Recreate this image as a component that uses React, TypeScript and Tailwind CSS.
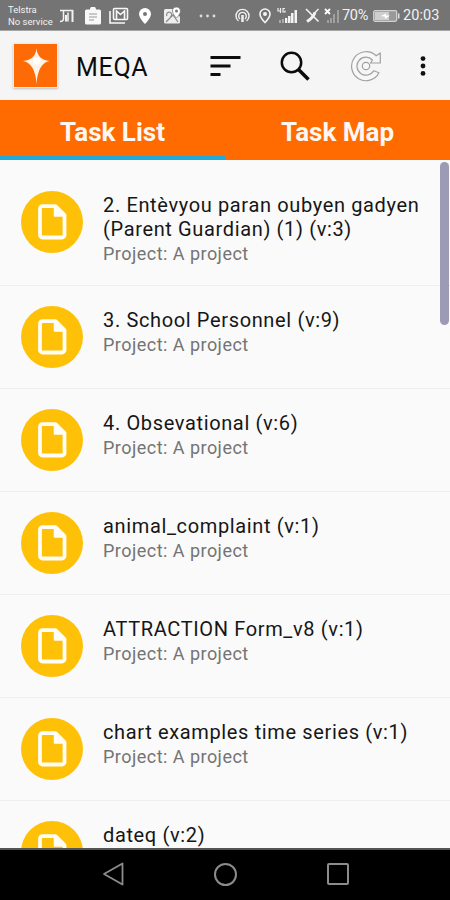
import type { ReactNode } from 'react';

interface Task {
  title: string;
  project?: string;
  tall?: boolean;
}

const TASKS: Task[] = [
  { title: '2. Entèvyou paran oubyen gadyen (Parent Guardian) (1) (v:3)', project: 'A project', tall: true },
  { title: '3. School Personnel (v:9)', project: 'A project' },
  { title: '4. Obsevational (v:6)', project: 'A project' },
  { title: 'animal_complaint (v:1)', project: 'A project' },
  { title: 'ATTRACTION Form_v8 (v:1)', project: 'A project' },
  { title: 'chart examples time series (v:1)', project: 'A project' },
  { title: 'dateq (v:2)' },
];

function Signal({ faded = false }: { faded?: boolean }) {
  return (
    <svg viewBox={faded ? '0 0 16 18' : '0 0 21 18'} className={faded ? 'w-[16px] h-[18px]' : 'w-[21px] h-[18px]'}>
      {faded ? (
        <>
          <path d="M1 2l5 5M6 2l-5 5" stroke="#fff" strokeWidth="1.8" />
          <path d="M3 13h2v3H3zM6 11h2v5H6zM9 7h2v9H9zM13 3h2v13h-2z" fill="#a0a0a0" />
        </>
      ) : (
        <>
          <path d="M1 1v3h3M3.500 1v5M8 1.500H6V5h2V3.500" stroke="#eee" strokeWidth="1.200" fill="none" />
          <path d="M2 13h2v3H2zM5 12h2v4H5z" fill="#aaa" />
          <path d="M8 11h2.300v5H8zM11 9h2.500v7H11zM14 6h2.500v10H14zM17.500 3H20v13h-2.500z" fill="#f4f4f4" />
        </>
      )}
    </svg>
  );
}

function StatusBar() {
  return (
    <div className="h-[31px] shrink-0 bg-[#747474] border-b border-[#a5a5a5] flex items-center pt-px pl-2 text-[#f2f2f2]">
      <div className="w-[52px] text-[9.500px] leading-[12px] whitespace-nowrap">
        <div>Telstra</div>
        <div>No service</div>
      </div>
      <svg viewBox="0 0 14 14" className="w-[14px] h-[14px]" fill="none" stroke="#f2f2f2">
        <path d="M0 1.500h13M3.500 1.500v8q0 3-3.500 3M8 3.500v9" strokeWidth="1.500" />
        <path d="M12.500 1v12M6 6v6.500" strokeWidth="2" />
      </svg>
      <svg viewBox="0 0 16 18" className="w-[16px] h-[18px] ml-[11px]">
        <path d="M1.500 2.500H5a3 3 0 0 1 6 0h3.500q1.500 0 1.500 1.500v12q0 1.500-1.500 1.500h-13Q0 17.500 0 16V4q0-1.500 1.500-1.500z" fill="#f8f8f8" />
        <path d="M4 7h8M4 10h8M4 13h5" stroke="#999" strokeWidth="1.200" />
      </svg>
      <svg viewBox="0 0 20 17" className="w-[20px] h-[17px] ml-2" fill="none" stroke="#f8f8f8">
        <path d="M1 4v12h15" strokeWidth="1.600" />
        <rect x="4.500" y="1.500" width="14" height="11" rx="1" strokeWidth="1.600" />
        <path d="M7.500 12V4l4 3.500 4-3.500v8" strokeWidth="1.600" />
      </svg>
      <svg viewBox="0 0 12 16" className="w-[12px] h-[16px] ml-[10px]" fill="#fff">
        <path fillRule="evenodd" d="M6 0a6 6 0 0 0-6 6c0 4 6 10 6 10s6-6 6-10a6 6 0 0 0-6-6zm0 4a2 2 0 1 1 0 4 2 2 0 0 1 0-4z" />
      </svg>
      <svg viewBox="0 0 17 17" className="w-[17px] h-[17px] ml-[13px]">
        <path d="M1.500 2H10l6 8v5q0 1.500-1.500 1.500h-13Q0 16.500 0 15V3.500Q0 2 1.500 2z" fill="#eee" />
        <path d="M2 15l7-7 5 7M3 9a2.500 2.500 0 1 1 3 1" fill="none" stroke="#8a8a8a" strokeWidth="1.200" />
        <path d="M12.500 0a4 4 0 0 0-4 4c0 3 4 7 4 7s4-4 4-7a4 4 0 0 0-4-4z" fill="#fff" stroke="#777" strokeWidth=".8" />
        <circle cx="12.500" cy="4" r="1.500" fill="#777" />
      </svg>
      <svg viewBox="0 0 17 4" className="w-[17px] h-[4px] ml-[18px]" fill="#ddd">
        <circle cx="2" cy="2" r="1.400" />
        <circle cx="8.500" cy="2" r="1.400" />
        <circle cx="15" cy="2" r="1.400" />
      </svg>
      <svg viewBox="0 0 15 15" className="w-[15px] h-[15px] ml-[19px]" fill="none" stroke="#f0f0f0" strokeWidth="1.400">
        <path d="M3.500 13a6.500 6.500 0 1 1 8 0M5 11a3.800 3.800 0 1 1 5 0" />
        <path d="M7.500 7v7" strokeWidth="2.500" />
      </svg>
      <svg viewBox="0 0 12 16" className="w-[12px] h-[16px] ml-[9px]" fill="none" stroke="#f5f5f5" strokeWidth="1.600">
        <path d="M6 1a5 5 0 0 0-5 5c0 3.500 5 8.500 5 8.500S11 9.500 11 6a5 5 0 0 0-5-5z" />
        <circle cx="6" cy="6" r="1.200" fill="#f5f5f5" />
      </svg>
      <div className="ml-[6px]">
        <Signal />
      </div>
      <svg viewBox="0 0 15 15" className="w-[15px] h-[15px] ml-[7px]" fill="none" stroke="#f2f2f2">
        <path d="M1 1l12.500 12.500" strokeWidth="1.600" />
        <path d="M13.500 1L9 5.500" strokeWidth="1.500" />
        <path d="M10 4.500Q8 10 2 13.500" strokeWidth="3" />
      </svg>
      <div className="ml-[4px]">
        <Signal faded />
      </div>
      <span className="text-[14.500px] w-[30px] ml-[2px] tracking-[-0.3px]">70%</span>
      <svg viewBox="0 0 27 12" className="w-[27px] h-[12px] ml-px">
        <rect x=".7" y=".7" width="23" height="10.600" rx="1.500" fill="#999" stroke="#d2d2d2" strokeWidth="1.300" />
        <path d="M2 2h14v8H2z" fill="#cfcfcf" />
        <path d="M25 3.500h1.500v5H25z" fill="#ddd" />
        <path d="M8 6l5-2.500v2h4l-5 3.500V6.800z" fill="#fff" />
      </svg>
      <span className="text-[14.500px] ml-[3px] tracking-[0.1px]">20:03</span>
    </div>
  );
}

function AppBar() {
  return (
    <header className="h-[69px] shrink-0 bg-[#f5f5f5] flex items-center pl-[14px]">
      <div className="w-[43px] h-[43px] bg-[#fd6a06] shadow-[0_1px_2px_1px_rgba(0,0,0,0.22)] ring-1 ring-[#f6e7dd]">
        <svg viewBox="0 0 43 43" className="w-full h-full">
          <path d="M22.500 4Q23.200 15.800 35.500 17Q24 19 22.500 40Q21 19 9 17Q21.800 15.800 22.500 4z" fill="#fff3e8" />
          <circle cx="22.500" cy="17" r="3.500" fill="#fff" />
        </svg>
      </div>
      <h1 className="ml-[19px] w-[134px] pt-[3px] text-[25px] leading-none tracking-[0.7px] text-[#0c0c0c]">MEQA</h1>
      <svg viewBox="0 0 31 22" className="w-[31px] h-[22px]" stroke="#0c0c0c" strokeWidth="2.800">
        <path d="M0.500 2.500h30M0.500 11h20M0.500 19.500h10" />
      </svg>
      <svg viewBox="0 0 30 30" className="w-[30px] h-[30px] ml-[39px]" fill="none" stroke="#0c0c0c">
        <circle cx="11.500" cy="11.500" r="9.700" strokeWidth="2.500" />
        <path d="M18.500 18.500l10 10" strokeWidth="3.500" />
      </svg>
      <svg viewBox="0 0 32 32" className="w-[32px] h-[32px] ml-[40px]" fill="#f7f7f7" stroke="#a0a0a0" strokeWidth="1.200" strokeLinejoin="round">
        <path d="M26.200 5.800L30.300 3v10H20.500l2-3a9 9 0 1 0 1.200 10.800l5.300 2A14.500 14.500 0 1 1 26.200 5.800z" />
        <circle cx="16" cy="16" r="3.700" />
      </svg>
      <svg viewBox="0 0 6 20" className="w-[6px] h-[20px] ml-[38px]" fill="#111">
        <circle cx="3" cy="2.600" r="2.400" />
        <circle cx="3" cy="10" r="2.400" />
        <circle cx="3" cy="17.400" r="2.400" />
      </svg>
    </header>
  );
}

function Tab({ active = false, children }: { active?: boolean; children: ReactNode }) {
  return (
    <button
      className={`flex-1 pt-[8px] text-[26px] leading-none font-bold text-[#fff8f2] border-b-[4px] ${
        active ? 'border-[#22a9d6]' : 'border-[#ff6b00]'
      }`}
    >
      {children}
    </button>
  );
}

function TaskRow({ task }: { task: Task }) {
  return (
    <li className={`flex shrink-0 border-b border-[#efefef] pl-[21px] ${task.tall ? 'h-[115px]' : 'h-[103.100px]'}`}>
      <div className="mt-5 w-[62px] h-[62px] shrink-0 rounded-full bg-[#ffc107] flex items-center justify-center">
        <svg viewBox="0 0 29 36" className="w-[29px] h-[36px]" fill="none" stroke="#fffdf5" strokeWidth="3.800" strokeLinejoin="round">
          <path d="M4.500 2.200h13l9 9V31a2.500 2.500 0 0 1-2.500 2.500H4.500A2.500 2.500 0 0 1 2 31V4.700a2.500 2.500 0 0 1 2.500-2.500z" />
          <path d="M16.500 2.500l9.500 9.500h-9.500z" fill="#fffdf5" strokeWidth="1.500" />
        </svg>
      </div>
      <div className="ml-5 pt-[22px] w-[330px]">
        <h2 className="text-[20px] leading-[24px] tracking-[0.64px] text-[#161616]">{task.title}</h2>
        {task.project && (
          <p className="text-[18px] leading-[26px] tracking-[0.470px] text-[#747474]">Project: {task.project}</p>
        )}
      </div>
    </li>
  );
}

function NavBar() {
  return (
    <nav className="h-[52px] shrink-0 bg-black border-t-2 border-[#555] flex items-center pb-[2px] pl-[102px]">
      <svg viewBox="0 0 23 24" className="w-[23px] h-[24px]" fill="none" stroke="#8c8c8c" strokeWidth="1.800" strokeLinejoin="round">
        <path d="M20.500 1.500v21L2 12z" />
      </svg>
      <div className="ml-[89px] w-[23px] h-[23px] rounded-full border-2 border-[#8c8c8c]" />
      <div className="ml-[90px] w-[22px] h-[22px] rounded-[2px] border-[2.500px] border-[#8c8c8c]" />
    </nav>
  );
}

export default function App() {
  return (
    <div className="w-[450px] h-[900px] flex flex-col overflow-hidden bg-[#fafafa] font-[Roboto,sans-serif]">
      <StatusBar />
      <AppBar />
      <div className="h-[60px] shrink-0 flex bg-[#ff6b00]">
        <Tab active>Task List</Tab>
        <Tab>Task Map</Tab>
      </div>
      <main className="relative flex-1 min-h-0 overflow-hidden">
        <ul className="flex flex-col pt-[11px]">
          {TASKS.map((task) => (
            <TaskRow key={task.title} task={task} />
          ))}
        </ul>
        {/* Scroll thumb floats over the list */}
        <div className="absolute top-[2px] right-px w-[9px] h-[163px] rounded-full bg-[#9c9ab5]" />
      </main>
      <NavBar />
    </div>
  );
}
